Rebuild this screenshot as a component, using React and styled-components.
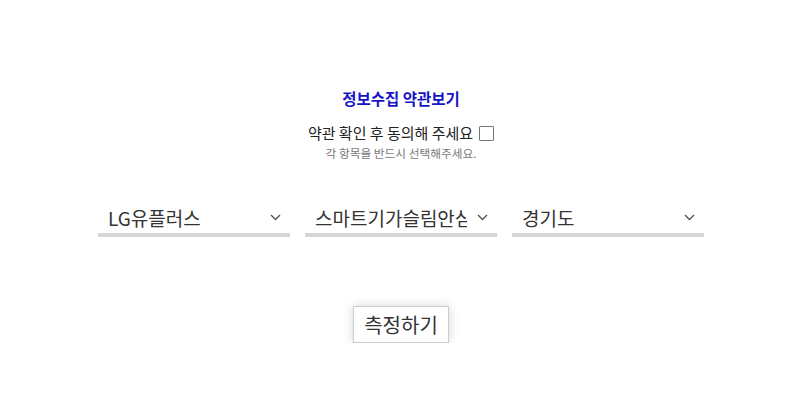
import React, { useState } from "react";
import styled, { createGlobalStyle } from "styled-components";

const GlobalStyle = createGlobalStyle`
	body {
		margin: 0;
		background: #fff;
		font-family: "Noto Sans CJK KR", "Noto Sans", sans-serif;
	}
`;

const Chevron = () => (
	<svg width="11" height="7" viewBox="0 0 11 7" fill="none">
		<path d="M1 1l4.5 4.5L10 1" stroke="#555" strokeWidth="1.4" />
	</svg>
);

const App = () => {
	const [agree, setAgree] = useState(false);
	const [carrier, setCarrier] = useState("LG유플러스");
	const [plan, setPlan] = useState("스마트기가슬림안심");
	const [region, setRegion] = useState("경기도");

	return (
		<Page>
			<GlobalStyle />
			<TermsLink>정보수집 약관보기</TermsLink>
			<AgreeRow>
				약관 확인 후 동의해 주세요
				<CheckBox
					type="checkbox"
					checked={agree}
					onChange={(e) => setAgree(e.target.checked)}
				/>
			</AgreeRow>
			<Notice>각 항목을 반드시 선택해주세요.</Notice>
			<SelectRow>
				<SelectWrap>
					<Select value={carrier} onChange={(e) => setCarrier(e.target.value)}>
						<option>LG유플러스</option>
						<option>SK브로드밴드</option>
						<option>KT</option>
					</Select>
					<Arrow>
						<Chevron />
					</Arrow>
				</SelectWrap>
				<SelectWrap>
					<Select value={plan} onChange={(e) => setPlan(e.target.value)}>
						<option>스마트기가슬림안심</option>
						<option>기가인터넷</option>
					</Select>
					<Arrow>
						<Chevron />
					</Arrow>
				</SelectWrap>
				<SelectWrap>
					<Select value={region} onChange={(e) => setRegion(e.target.value)}>
						<option>경기도</option>
						<option>서울특별시</option>
					</Select>
					<Arrow>
						<Chevron />
					</Arrow>
				</SelectWrap>
			</SelectRow>
			<MeasureButton>측정하기</MeasureButton>
		</Page>
	);
};

export default App;

const Page = styled.div`
	display: flex;
	flex-direction: column;
	align-items: center;
	padding-top: 86px;
	padding-left: 16px;
	width: 786px;
	box-sizing: border-box;
`;
const TermsLink = styled.div`
	color: #1515c8;
	font-size: 15.5px;
	font-weight: 700;
	line-height: 24px;
	cursor: pointer;
`;
const AgreeRow = styled.label`
	display: flex;
	align-items: center;
	gap: 4px;
	margin-top: 12px;
	font-size: 15px;
	color: #222;
	line-height: 22px;
`;
const CheckBox = styled.input`
	appearance: none;
	width: 15px;
	height: 15px;
	margin: 0 0 0 2px;
	border: 1.5px solid #777;
	border-radius: 1px;
	background: #fff;
	&:checked {
		background: #555;
	}
`;
const Notice = styled.div`
	font-size: 11.7px;
	color: #777;
	line-height: 16px;
	margin-top: 1px;
`;
const SelectRow = styled.div`
	display: flex;
	gap: 15px;
	margin-top: 40px;
`;
const SelectWrap = styled.div`
	position: relative;
	width: 192px;
`;
const Select = styled.select`
	appearance: none;
	width: 100%;
	height: 36px;
	border: none;
	border-bottom: 4px solid #d6d6d6;
	border-radius: 0;
	background: #fff;
	padding: 0 30px 0 10px;
	font-family: "Noto Sans CJK KR", "Noto Sans", sans-serif;
	font-size: 19px;
	color: #333;
	outline: none;
	box-sizing: border-box;
`;
const Arrow = styled.span`
	position: absolute;
	right: 9px;
	top: 13px;
	pointer-events: none;
	display: flex;
`;
const MeasureButton = styled.button`
	margin-top: 69px;
	width: 96px;
	height: 37px;
	border: 1px solid #ccc;
	background: #fff;
	box-shadow: 0 0 10px rgba(0, 0, 0, 0.16);
	font-family: "Noto Sans CJK KR", "Noto Sans", sans-serif;
	font-size: 20px;
	color: #333;
	cursor: pointer;
`;
